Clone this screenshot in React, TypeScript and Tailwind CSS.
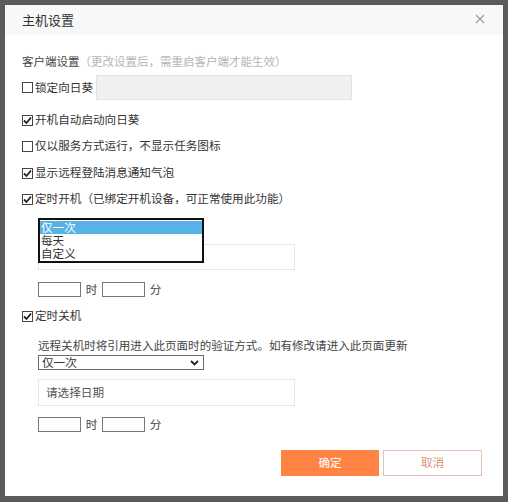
import { useState } from "react";

const font = { fontFamily: '"Noto Sans CJK SC", "Noto Sans", sans-serif' };

function Check({ checked }: { checked: boolean }) {
  return (
    <span className="w-[11px] h-[11px] border border-[#444] bg-white flex items-center justify-center shrink-0">
      {checked && (
        <svg width="9" height="9" viewBox="0 0 9 9">
          <path d="M1 4.5 L3.5 7 L8 1.5" fill="none" stroke="#222" strokeWidth="1.8" />
        </svg>
      )}
    </span>
  );
}

function CheckRow({ checked, label, hint, className }: { checked: boolean; label: string; hint?: string; className?: string }) {
  return (
    <div className={"flex items-center gap-[2px] h-[16px] text-[11.6px] text-[#333] " + (className ?? "")}>
      <Check checked={checked} />
      <span className="whitespace-nowrap">{label}</span>
      {hint && <span className="whitespace-nowrap">{hint}</span>}
    </div>
  );
}

function TimeRow({ className }: { className?: string }) {
  return (
    <div className={"flex items-center h-[15px] text-[11.6px] text-[#444] " + (className ?? "")}>
      <span className="w-[43px] h-[15px] border border-[#777] bg-white" />
      <span className="w-[21px] text-center">时</span>
      <span className="w-[43px] h-[15px] border border-[#777] bg-white" />
      <span className="w-[21px] text-center">分</span>
    </div>
  );
}

function DateInput({ className, h }: { className?: string; h: string }) {
  return (
    <div className={"w-[257px] border border-[#e6e6e6] bg-white flex items-center px-[7px] text-[11.6px] text-[#555] " + h + " " + (className ?? "")}>
      请选择日期
    </div>
  );
}

export default function App() {
  const [opts] = useState(["仅一次", "每天", "自定义"]);

  return (
    <div className="w-[508px] h-[502px] bg-[#5b5b5b] pt-[5px] pl-[5px] pr-[5px] pb-[6px] flex" style={font}>
      <div className="flex-1 bg-white flex flex-col">
        <div className="h-[30px] bg-[#f8f8f8] flex items-center justify-between pl-[17px] pr-[18px]">
          <span className="text-[13px] text-[#333]">主机设置</span>
          <svg width="10" height="10" viewBox="0 0 10 10" className="mb-[2px]">
            <path d="M1 1 L9 9 M9 1 L1 9" stroke="#9a9a9a" strokeWidth="1.1" />
          </svg>
        </div>

        <div className="flex flex-col pl-[17px]">
          <div className="mt-[19px] h-[16px] flex items-center text-[11.5px] whitespace-nowrap">
            <span className="text-[#444]">客户端设置</span>
            <span className="text-[#b5b5b5]">（更改设置后，需重启客户端才能生效）</span>
          </div>

          <div className="mt-[5px] flex items-center h-[25px]">
            <CheckRow checked={false} label="锁定向日葵" />
            <div className="ml-[3px] w-[256px] h-[25px] bg-[#f0f0f0] border border-[#e4e4e4]" />
          </div>

          <CheckRow checked label="开机自动启动向日葵" className="mt-[12px]" />
          <CheckRow checked={false} label="仅以服务方式运行，不显示任务图标" className="mt-[10px]" />
          <CheckRow checked label="显示远程登陆消息通知气泡" className="mt-[11px]" />
          <CheckRow checked label="定时开机（已绑定开机设备，可正常使用此功能）" className="mt-[10px]" />

          <div className="pl-[16px] flex flex-col">
            <div className="relative h-[37px]">
              <div className="absolute left-0 top-[11px] z-10 w-[166px] border-2 border-[#111] bg-white flex flex-col py-[1px] text-[11.6px] leading-[13px]">
                {opts.map((o, i) => (
                  <span key={o} className={i === 0 ? "bg-[#57b3e6] text-white px-[1px]" : "text-[#333] px-[1px]"}>
                    {o}
                  </span>
                ))}
              </div>
            </div>
            <DateInput h="h-[26px]" />
            <TimeRow className="mt-[12px]" />
          </div>

          <CheckRow checked label="定时关机" className="mt-[11px]" />

          <div className="pl-[16px] flex flex-col">
            <div className="mt-[14px] h-[16px] flex items-center text-[11.55px] text-[#444] whitespace-nowrap">
              远程关机时将引用进入此页面时的验证方式。如有修改请进入此页面更新
            </div>
            <div className="mt-[1px] w-[166px] h-[15px] border border-[#6b6b6b] flex items-center justify-between pl-[3px] pr-[4px] text-[11.6px] text-[#333]">
              <span>仅一次</span>
              <svg width="9" height="6" viewBox="0 0 9 6">
                <path d="M1 1 L4.5 4.5 L8 1" fill="none" stroke="#222" strokeWidth="1.8" />
              </svg>
            </div>
            <DateInput h="h-[27px]" className="mt-[9px]" />
            <TimeRow className="mt-[11px]" />
          </div>
        </div>

        <div className="mt-[18px] flex justify-end gap-[4px] pr-[21px]">
          <button className="w-[98px] h-[26px] bg-[#ff8444] text-white text-[11.6px]">确定</button>
          <button className="w-[99px] h-[26px] bg-white border border-[#e3c2b2] text-[#d9967a] text-[11.6px]">取消</button>
        </div>
      </div>
    </div>
  );
}
